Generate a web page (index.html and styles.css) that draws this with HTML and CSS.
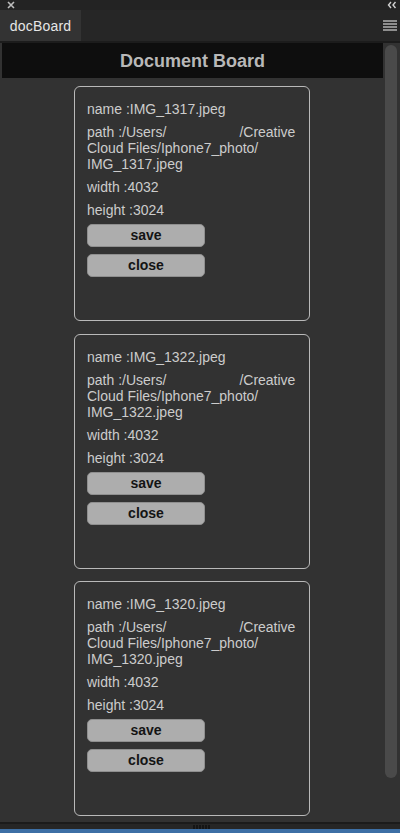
FILE: index.html
```html
<!DOCTYPE html>
<html>
<head>
<meta charset="utf-8">
<link rel="stylesheet" href="styles.css">
</head>
<body>
<div class="topstrip">
  <svg class="icon" width="8" height="8" viewBox="0 0 8 8"><path d="M1 1L7 7M7 1L1 7" stroke="#bdbdbd" stroke-width="1.6"/></svg>
  <svg class="icon" width="10" height="8" viewBox="0 0 10 8"><path d="M4 1L1.5 4L4 7M8.5 1L6 4L8.5 7" stroke="#d0d0d0" stroke-width="1.4" fill="none"/></svg>
</div>
<div class="tabbar">
  <div class="tab">docBoard</div>
  <div class="menu"><span></span><span></span><span></span><span></span></div>
</div>
<div class="main">
  <div class="panel">
    <div class="header">Document Board</div>
    <div class="cards">
      <div class="card">
        <p>name :IMG_1317.jpeg</p>
        <p>path :/Users/<span class="gap"></span>/Creative<br>Cloud Files/Iphone7_photo/<br>IMG_1317.jpeg</p>
        <p>width :4032</p>
        <p>height :3024</p>
        <button class="btn">save</button>
        <button class="btn">close</button>
      </div>
      <div class="card">
        <p>name :IMG_1322.jpeg</p>
        <p>path :/Users/<span class="gap"></span>/Creative<br>Cloud Files/Iphone7_photo/<br>IMG_1322.jpeg</p>
        <p>width :4032</p>
        <p>height :3024</p>
        <button class="btn">save</button>
        <button class="btn">close</button>
      </div>
      <div class="card">
        <p>name :IMG_1320.jpeg</p>
        <p>path :/Users/<span class="gap"></span>/Creative<br>Cloud Files/Iphone7_photo/<br>IMG_1320.jpeg</p>
        <p>width :4032</p>
        <p>height :3024</p>
        <button class="btn">save</button>
        <button class="btn">close</button>
      </div>
    </div>
  </div>
  <div class="scroll"><div class="thumb"></div></div>
</div>
<div class="bottom">
  <div class="grip"><span></span><span></span><span></span><span></span><span></span><span></span></div>
</div>
<div class="blue"></div>
</body>
</html>
```
FILE: styles.css
```css
* { box-sizing: border-box; }
html, body { margin: 0; padding: 0; }
body {
  width: 400px;
  height: 833px;
  overflow: hidden;
  background: #262626;
  font-family: "Liberation Sans", Arial, sans-serif;
}
.topstrip {
  height: 10px;
  background: #232323;
  display: flex;
  justify-content: space-between;
  align-items: center;
  padding: 0 3px 0 7px;
}
.icon { display: block; }
.tabbar {
  height: 33px;
  background: #262626;
  display: flex;
  justify-content: space-between;
  align-items: stretch;
  border-bottom: 2px solid #1c1c1c;
}
.tab {
  width: 81px;
  background: #333333;
  color: #e6e6e6;
  font-size: 14px;
  display: flex;
  align-items: center;
  justify-content: center;
  letter-spacing: 0.2px;
}
.menu {
  width: 14px;
  margin-right: 3px;
  display: flex;
  flex-direction: column;
  justify-content: center;
  gap: 1px;
}
.menu span {
  display: block;
  height: 2px;
  background: #8e8e8e;
}
.main {
  height: 779px;
  display: flex;
  background: #323232;
}
.panel {
  flex: 1;
  overflow: hidden;
  padding-left: 2px;
}
.header {
  width: 381px;
  height: 35px;
  background: #0e0e0e;
  color: #b8b8b8;
  font-weight: bold;
  font-size: 18px;
  display: flex;
  align-items: center;
  justify-content: center;
  padding-top: 1px;
}
.cards {
  display: flex;
  flex-direction: column;
  gap: 12.5px;
  padding: 8px 0 0 72px;
}
.card {
  width: 236px;
  height: 235px;
  flex-shrink: 0;
  border: 1px solid #b9b9b9;
  border-radius: 6px;
  padding: 14px 12px 0 12px;
  display: flex;
  flex-direction: column;
  align-items: flex-start;
}
.card p {
  margin: 0 0 7px 0;
  color: #cccccc;
  font-size: 14px;
  line-height: 16px;
}
.gap { display: inline-block; width: 73px; }
.btn {
  width: 118px;
  height: 23px;
  margin: 0 0 7px 0;
  padding: 0;
  border: 1px solid #8f8f8f;
  border-radius: 5px;
  background: #adadad;
  color: #141414;
  font-family: "Liberation Sans", Arial, sans-serif;
  font-weight: bold;
  font-size: 14px;
  line-height: 21px;
}
.card p + p + p + p { margin-bottom: 6px; }
.scroll {
  width: 17px;
  padding: 2px 2px 0 2px;
  background: #323232;
}
.thumb {
  width: 12px;
  height: 733px;
  border-radius: 6px;
  background: #4a4a4a;
}
.bottom {
  height: 7px;
  background: #262626;
  border-top: 2px solid #1b1b1b;
  display: flex;
  justify-content: center;
  align-items: center;
}
.grip { display: flex; gap: 1px; margin-left: 2px; }
.grip span { width: 2px; height: 4px; background: #151515; }
.blue { height: 4px; background: #3d6fa5; }
```
